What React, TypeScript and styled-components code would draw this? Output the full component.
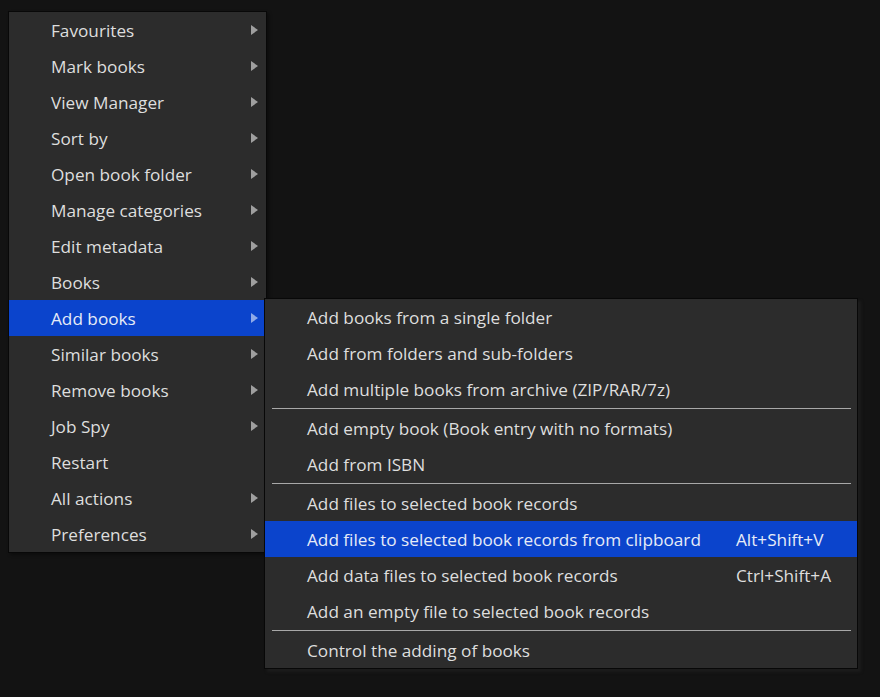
import * as React from "react";
import styled, { createGlobalStyle } from "styled-components";

const GlobalStyle = createGlobalStyle`
  html, body {
    margin: 0;
    padding: 0;
    background: #131313;
  }
  body {
    font-family: "Open Sans", "Noto Sans", "Liberation Sans", sans-serif;
    font-size: 17.2px;
    color: #dedede;
  }
`;

const Desktop = styled.div`
  position: relative;
  width: 880px;
  height: 697px;
  padding: 11px 0 0 8px;
  box-sizing: border-box;
  overflow: hidden;
`;

const Menu = styled.div`
  width: 259px;
  box-sizing: border-box;
  background: #2c2c2c;
  border: 1px solid #080808;
  box-shadow: 2px 2px 3px rgba(0, 0, 0, 0.35);
`;

/* the open submenu sits over the page, next to its parent item */
const SubMenu = styled.div`
  position: absolute;
  left: 264px;
  top: 298px;
  width: 594px;
  box-sizing: border-box;
  background: #2c2c2c;
  border: 1px solid #080808;
  box-shadow: 3px 3px 3px rgba(40, 40, 40, 0.45);
`;

const Item = styled.div<{ $active?: boolean }>`
  position: relative;
  display: flex;
  align-items: center;
  height: 36px;
  padding-left: 42px;
  background: ${(p) => (p.$active ? "#0b44cc" : "transparent")};
  color: ${(p) => (p.$active ? "#e6ebf7" : "#dedede")};
  white-space: nowrap;
`;

const Label = styled.span`
  width: 429px;
  flex: none;
`;

const MainLabel = styled.span`
  flex: 1;
`;

const Shortcut = styled.span`
  flex: none;
`;

const Arrow = styled.span`
  flex: none;
  width: 0;
  height: 0;
  margin-right: 8px;
  border-top: 5px solid transparent;
  border-bottom: 5px solid transparent;
  border-left: 7px solid rgba(255, 255, 255, 0.55);
`;

const Separator = styled.div`
  height: 3px;
  display: flex;
  align-items: center;
  padding: 0 6px 0 7px;
  &::after {
    content: "";
    flex: 1;
    height: 1px;
    background: #a8a8a8;
  }
`;

const mainItems: { label: string; sub: boolean }[] = [
  { label: "Favourites", sub: true },
  { label: "Mark books", sub: true },
  { label: "View Manager", sub: true },
  { label: "Sort by", sub: true },
  { label: "Open book folder", sub: true },
  { label: "Manage categories", sub: true },
  { label: "Edit metadata", sub: true },
  { label: "Books", sub: true },
  { label: "Add books", sub: true },
  { label: "Similar books", sub: true },
  { label: "Remove books", sub: true },
  { label: "Job Spy", sub: true },
  { label: "Restart", sub: false },
  { label: "All actions", sub: true },
  { label: "Preferences", sub: true },
];

type SubEntry = { label: string; shortcut?: string; active?: boolean } | "sep";

const subItems: SubEntry[] = [
  { label: "Add books from a single folder" },
  { label: "Add from folders and sub-folders" },
  { label: "Add multiple books from archive (ZIP/RAR/7z)" },
  "sep",
  { label: "Add empty book (Book entry with no formats)" },
  { label: "Add from ISBN" },
  "sep",
  { label: "Add files to selected book records" },
  {
    label: "Add files to selected book records from clipboard",
    shortcut: "Alt+Shift+V",
    active: true,
  },
  { label: "Add data files to selected book records", shortcut: "Ctrl+Shift+A" },
  { label: "Add an empty file to selected book records" },
  "sep",
  { label: "Control the adding of books" },
];

export default function App() {
  return (
    <>
      <GlobalStyle />
      <Desktop>
        <Menu>
          {mainItems.map((it) => (
            <Item key={it.label} $active={it.label === "Add books"}>
              <MainLabel>{it.label}</MainLabel>
              {it.sub && <Arrow />}
            </Item>
          ))}
        </Menu>
        <SubMenu>
          {subItems.map((it, i) =>
            it === "sep" ? (
              <Separator key={i} />
            ) : (
              <Item key={i} $active={it.active}>
                <Label>{it.label}</Label>
                {it.shortcut && <Shortcut>{it.shortcut}</Shortcut>}
              </Item>
            )
          )}
        </SubMenu>
      </Desktop>
    </>
  );
}
